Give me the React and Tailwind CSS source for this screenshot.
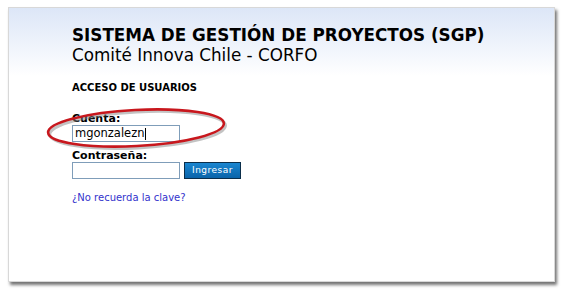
import React from 'react';

const font = { fontFamily: '"DejaVu Sans", Verdana, sans-serif' };

export default function App() {
  return (
    <div className="w-[564px] h-[289px] bg-white pt-[7px] pl-[8px]" style={font}>
      <div className="relative w-[547px] h-[275px] bg-gradient-to-b from-[#dce6f7] via-white via-[25%] to-white border border-[#d8d8d8] shadow-[2px_3px_3px_rgba(0,0,0,0.55)]">
        <div className="pl-[63px] pt-[17px]">
          <h1 className="text-[16.8px] leading-[20px] font-bold text-black">SISTEMA DE GESTIÓN DE PROYECTOS (SGP)</h1>
          <p className="text-[16.8px] leading-[20px] text-black">Comité Innova Chile - CORFO</p>

          <h2 className="mt-[16px] text-[10px] leading-[14px] font-bold text-black">ACCESO DE USUARIOS</h2>

          <div className="mt-[17px]">
            <label className="block text-[11px] leading-[13px] font-bold text-black">Cuenta:</label>
            <div className="w-[108px] h-[17px] border border-[#7f9db9] bg-white text-[11.5px] leading-[15px] pl-[2px] flex items-center">
              <span>mgonzalezn</span>
              <span className="w-px h-[12px] bg-black"></span>
            </div>
          </div>

          <div className="mt-[8px]">
            <label className="block text-[11px] leading-[12px] font-bold text-black">Contraseña:</label>
            <div className="flex gap-[4px]">
              <div className="w-[108px] h-[17px] border border-[#7f9db9] bg-white"></div>
              <button className="w-[57px] h-[17px] bg-gradient-to-b from-[#1a86d0] to-[#0a64aa] border border-[#0b2e4a] text-white text-[9px] tracking-[0.5px] leading-[15px]">Ingresar</button>
            </div>
          </div>

          <a href="#" className="block mt-[12px] text-[10px] leading-[13px] text-[#3333cc]">¿No recuerda la clave?</a>
        </div>

        <svg className="absolute left-[35px] top-[96px]" width="196" height="50" viewBox="0 0 196 50">
          <g transform="rotate(-3 92 24)">
            <ellipse cx="92" cy="24" rx="88" ry="18" fill="none" stroke="#888" strokeOpacity="0.5" strokeWidth="3" transform="translate(1.5 2)" />
            <ellipse cx="92" cy="24" rx="88" ry="18" fill="none" stroke="#c8171d" strokeWidth="2.6" />
          </g>
        </svg>
      </div>
    </div>
  );
}
